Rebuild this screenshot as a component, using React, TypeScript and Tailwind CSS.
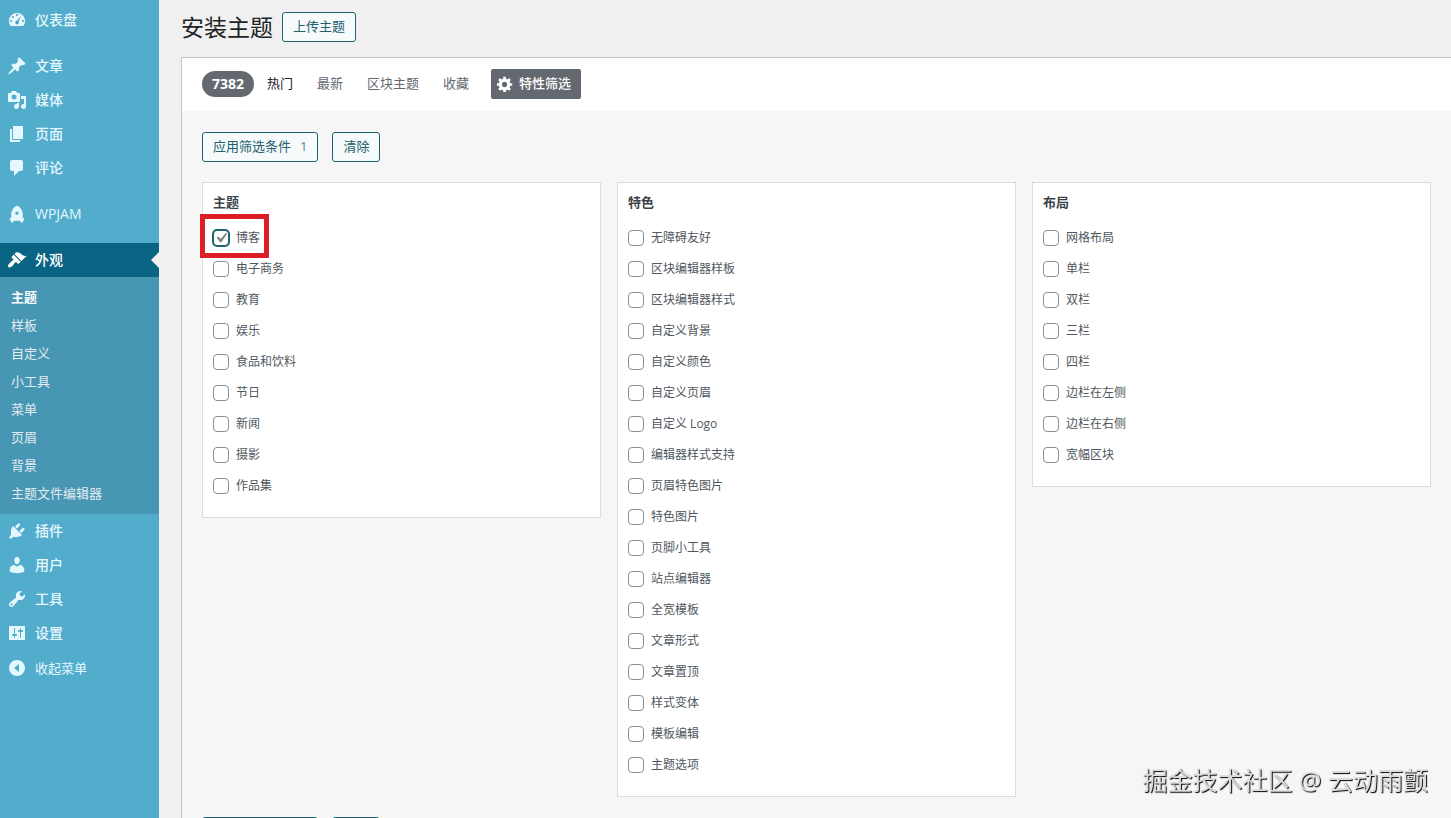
import { clsx } from "clsx";
import type { ReactNode } from "react";
import { RiRocketFill } from "react-icons/ri";

type MenuItem = {
  label: string;
  icon: ReactNode;
  separatorBefore?: boolean;
  children?: string[];
};

type FeatureGroup = {
  name: string;
  features: string[];
};

function Dashicon({ d, className }: { d: string; className?: string }) {
  return (
    <svg viewBox="0 0 20 20" className={clsx("size-5 shrink-0", className)} fill="currentColor" fillRule="evenodd" aria-hidden="true">
      <path d={d} />
    </svg>
  );
}

function DashboardIcon() {
  return (
    <svg viewBox="0 0 20 20" className="size-5 shrink-0" fill="currentColor" aria-hidden="true">
      <path d="M3.76 16h12.48A7.998 7.998 0 0 0 10 3a7.998 7.998 0 0 0-6.24 13z" />
      <g className="fill-[#4a9cbd]">
        <circle cx="10" cy="5" r="1" />
        <circle cx="6" cy="7" r="1" />
        <circle cx="4" cy="11" r="1" />
        <circle cx="16" cy="11" r="1" />
        <path d="M14.4 5.6 11.5 11.4a1.8 1.8 0 1 1-1.6-.7z" />
      </g>
    </svg>
  );
}

const icons = {
  post: "M10.44 3.02l1.82-1.82 6.36 6.35-1.83 1.82c-1.05-.68-2.48-.57-3.41.36l-.75.75c-.92.93-1.04 2.35-.35 3.41l-1.83 1.82-2.41-2.41-2.8 2.79c-.42.42-3.38 2.71-3.8 2.29s1.86-3.39 2.28-3.81l2.79-2.79L4.1 9.36l1.83-1.82c1.05.69 2.48.57 3.4-.36l.75-.75c.93-.92 1.05-2.35.36-3.41z",
  media:
    "M13 11V4c0-.55-.45-1-1-1h-1.67L9 1H5L3.67 3H2c-.55 0-1 .45-1 1v7c0 .55.45 1 1 1h10c.55 0 1-.45 1-1zM7 4.5c1.38 0 2.5 1.12 2.5 2.5S8.38 9.5 7 9.5 4.5 8.38 4.5 7 5.62 4.5 7 4.5zM14 6h5v10.5c0 1.38-1.12 2.5-2.5 2.5S14 17.88 14 16.5s1.12-2.5 2.5-2.5c.17 0 .34.02.5.05V9h-3V6zm-4 8.05V13h2v3.5c0 1.38-1.12 2.5-2.5 2.5S7 17.88 7 16.5 8.12 14 9.5 14c.17 0 .34.02.5.05z",
  page: "M6 15V2h10v13H6zm-1 1h8v2H3V5h2v11z",
  comments: "M5 2h9c1.1 0 2 .9 2 2v7c0 1.1-.9 2-2 2h-2l-5 5v-5H5c-1.1 0-2-.9-2-2V4c0-1.1.9-2 2-2z",
  appearance:
    "M14.48 11.06L7.41 3.99l1.5-1.5c.5-.56 2.3-.47 3.51.32 1.21.8 1.43 1.28 2.91 2.1 1.18.64 2.45 1.26 4.45.85zm-.71.71L6.7 4.7 4.93 6.47c-.39.39-.39 1.02 0 1.41l1.06 1.06c.39.39.39 1.03 0 1.42-.6.6-1.43 1.11-2.21 1.69-.35.26-.7.53-1.01.84C1.43 14.23.4 16.08 1.4 17.07c.99 1 2.84-.03 4.18-1.36.31-.31.58-.66.85-1.02.57-.78 1.08-1.61 1.69-2.21.39-.39 1.02-.39 1.41 0l1.06 1.06c.39.39 1.02.39 1.41 0z",
  plugins:
    "M13.11 4.36L9.87 7.6 8 5.73l3.24-3.24c.35-.34 1.05-.2 1.56.32.52.51.66 1.21.31 1.55zm-8 1.77l.91-1.12 9.01 9.01-1.19.84c-.71.71-2.63 1.16-3.82 1.16H6.14L4.9 17.26c-.59.59-1.54.59-2.12 0-.59-.58-.59-1.53 0-2.12l1.24-1.24v-3.88c0-1.13.4-3.19 1.09-3.89zm7.26 3.97l3.24-3.24c.34-.35 1.04-.21 1.55.31.52.51.66 1.21.31 1.55l-3.24 3.25z",
  users:
    "M10 9.25c-2.27 0-2.73-3.44-2.73-3.44C7 4.02 7.82 2 9.97 2c2.16 0 2.98 2.02 2.71 3.81 0 0-.41 3.44-2.68 3.44zm0 2.57L12.72 10c2.39 0 4.52 2.33 4.52 4.53v2.49s-3.65 1.13-7.24 1.13c-3.65 0-7.24-1.13-7.24-1.13v-2.49c0-2.25 1.94-4.48 4.47-4.48z",
  tools:
    "M16.68 9.77c-1.34 1.34-3.3 1.67-4.95.99l-5.41 6.52c-.99.99-2.59.99-3.58 0s-.99-2.59 0-3.57l6.52-5.42c-.68-1.65-.35-3.61.99-4.95 1.28-1.28 3.12-1.62 4.72-1.06l-2.89 2.89 2.82 2.82 2.86-2.87c.53 1.58.18 3.39-1.08 4.65zM3.81 16.21c.4.39 1.04.39 1.43 0 .4-.4.4-1.04 0-1.43-.39-.4-1.03-.4-1.43 0-.39.39-.39 1.03 0 1.43z",
  settings:
    "M18 16V4c0-.55-.45-1-1-1H3c-.55 0-1 .45-1 1v12c0 .55.45 1 1 1h14c.55 0 1-.45 1-1zM8 11h1c.55 0 1 .45 1 1s-.45 1-1 1H8v1.5c0 .28-.22.5-.5.5s-.5-.22-.5-.5V13H6c-.55 0-1-.45-1-1s.45-1 1-1h1V5.5c0-.28.22-.5.5-.5s.5.22.5.5V11zm5-2h-1c-.55 0-1-.45-1-1s.45-1 1-1h1V5.5c0-.28.22-.5.5-.5s.5.22.5.5V7h1c.55 0 1 .45 1 1s-.45 1-1 1h-1v5.5c0 .28-.22.5-.5.5s-.5-.22-.5-.5V9z",
  collapse: "M10 2a8 8 0 1 0 0 16 8 8 0 0 0 0-16zm2 4v8l-5-4z",
  gear: "M18 12h-2.18c-.17.7-.44 1.35-.81 1.93l1.54 1.54-2.1 2.1-1.54-1.54c-.58.36-1.23.63-1.91.79V19H8v-2.18c-.68-.16-1.33-.43-1.91-.79l-1.54 1.54-2.12-2.12 1.54-1.54c-.36-.58-.63-1.23-.79-1.91H1V9.03h2.17c.16-.7.44-1.35.8-1.94L2.43 5.55l2.1-2.1 1.54 1.54c.58-.37 1.24-.64 1.93-.81V2h3v2.18c.68.16 1.33.43 1.91.79l1.54-1.54 2.12 2.12-1.54 1.54c.36.59.64 1.24.8 1.94H18V12zm-8.5 1.5c1.66 0 3-1.34 3-3s-1.34-3-3-3-3 1.34-3 3 1.34 3 3 3z",
};

const menu: MenuItem[] = [
  { label: "仪表盘", icon: <DashboardIcon /> },
  { label: "文章", icon: <Dashicon d={icons.post} />, separatorBefore: true },
  { label: "媒体", icon: <Dashicon d={icons.media} /> },
  { label: "页面", icon: <Dashicon d={icons.page} /> },
  { label: "评论", icon: <Dashicon d={icons.comments} /> },
  { label: "WPJAM", icon: <RiRocketFill className="size-5 shrink-0" />, separatorBefore: true },
  {
    label: "外观",
    icon: <Dashicon d={icons.appearance} />,
    separatorBefore: true,
    children: ["主题", "样板", "自定义", "小工具", "菜单", "页眉", "背景", "主题文件编辑器"],
  },
  { label: "插件", icon: <Dashicon d={icons.plugins} /> },
  { label: "用户", icon: <Dashicon d={icons.users} /> },
  { label: "工具", icon: <Dashicon d={icons.tools} /> },
  { label: "设置", icon: <Dashicon d={icons.settings} /> },
];

const groups: FeatureGroup[] = [
  {
    name: "主题",
    features: ["博客", "电子商务", "教育", "娱乐", "食品和饮料", "节日", "新闻", "摄影", "作品集"],
  },
  {
    name: "特色",
    features: [
      "无障碍友好",
      "区块编辑器样板",
      "区块编辑器样式",
      "自定义背景",
      "自定义颜色",
      "自定义页眉",
      "自定义 Logo",
      "编辑器样式支持",
      "页眉特色图片",
      "特色图片",
      "页脚小工具",
      "站点编辑器",
      "全宽模板",
      "文章形式",
      "文章置顶",
      "样式变体",
      "模板编辑",
      "主题选项",
    ],
  },
  {
    name: "布局",
    features: ["网格布局", "单栏", "双栏", "三栏", "四栏", "边栏在左侧", "边栏在右侧", "宽幅区块"],
  },
];

function Sidebar() {
  return (
    <nav className="w-[159px] shrink-0 bg-[#52accc] pt-[3px] text-sm font-medium text-[#e5f8ff]">
      <ul>
        {menu.map((item) => (
          <li key={item.label} className={clsx(item.separatorBefore && "mt-3")}>
            <a
              href="#"
              className={clsx(
                "relative flex h-[34px] items-center gap-2 pl-[7px]",
                item.children && "bg-[#096484] text-white",
              )}
            >
              {item.icon}
              {item.label}
              {item.children && (
                <span className="absolute right-0 border-y-8 border-r-8 border-y-transparent border-r-[#f0f0f1]" />
              )}
            </a>
            {item.children && (
              <ul className="bg-[#4796b3] pt-1.5 pb-[7px] text-[13px] font-normal text-[#e2ecf1]">
                {item.children.map((child, i) => (
                  <li key={child}>
                    <a
                      href="#"
                      className={clsx("flex h-7 items-center pl-[11px]", i === 0 && "font-bold text-white")}
                    >
                      {child}
                    </a>
                  </li>
                ))}
              </ul>
            )}
          </li>
        ))}
      </ul>
      <button type="button" className="mt-px flex h-[34px] items-center gap-2 pl-[7px] text-[13px] font-normal">
        <Dashicon d={icons.collapse} />
        收起菜单
      </button>
    </nav>
  );
}

function OutlineButton({ children }: { children: ReactNode }) {
  return (
    <button
      type="button"
      className="flex h-[30px] items-center rounded-[3px] border border-[#1c6470] bg-[#f6fafa] px-2.5 text-[13px] text-[#22606f]"
    >
      {children}
    </button>
  );
}

function FilterButtons() {
  return (
    <div className="flex gap-3.5">
      <OutlineButton>
        应用筛选条件
        <span className="pl-[9px] text-[#5d8792]">1</span>
      </OutlineButton>
      <OutlineButton>清除</OutlineButton>
    </div>
  );
}

function FilterBar() {
  return (
    <div className="flex h-[53px] items-center bg-white px-5 pb-0.5 text-[13px] text-[#646970]">
      <span className="rounded-full bg-[#646970] px-2.5 text-sm leading-[26px] font-bold text-white">7382</span>
      <div className="ml-[13px] flex gap-6">
        <a href="#" className="text-[#1d2327]">
          热门
        </a>
        <a href="#">最新</a>
        <a href="#">区块主题</a>
        <a href="#">收藏</a>
      </div>
      <button
        type="button"
        className="ml-[22px] flex h-[30px] items-center gap-1 rounded-xs bg-[#646970] pr-2.5 pl-1 font-medium text-white"
      >
        <Dashicon d={icons.gear} className="p-px" />
        特性筛选
      </button>
    </div>
  );
}

function FeatureOption({ label, highlighted }: { label: string; highlighted: boolean }) {
  return (
    <li className="flex h-[31px] items-center">
      <label className="relative flex items-center gap-[7px]">
        <input
          type="checkbox"
          defaultChecked={highlighted}
          className="peer size-4 appearance-none rounded-sm border border-[#8c8f94] bg-white checked:border-[#1c6470] checked:ring-1 checked:ring-[#1c6470]"
        />
        <svg
          viewBox="0 0 20 20"
          className="pointer-events-none absolute -left-0.5 hidden size-5 fill-[#82878c] peer-checked:block"
          aria-hidden="true"
        >
          <path d="M14.83 4.89l1.34.94-5.81 8.38H9.02L5.78 9.67l1.34-1.25 2.57 2.4z" />
        </svg>
        {label}
        {highlighted && <span className="absolute -top-4 -right-[9px] -bottom-3 -left-[13px] border-[5px] border-[#dc1f26]" />}
      </label>
    </li>
  );
}

function FeatureGroupCard({ group }: { group: FeatureGroup }) {
  return (
    <fieldset className="flex-1 border border-[#dcdcde] bg-white px-2.5 pt-[9px] pb-4 text-xs text-[#50575e]">
      <legend className="float-left w-full text-[13px] leading-5 font-bold text-[#3c434a]">{group.name}</legend>
      <ul className="clear-both pt-2.5">
        {group.features.map((feature) => (
          <FeatureOption key={feature} label={feature} highlighted={feature === "博客"} />
        ))}
      </ul>
    </fieldset>
  );
}

export default function App() {
  return (
    <div className="flex h-screen overflow-hidden bg-[#f0f0f0] font-['Open_Sans','Noto_Sans_CJK_SC',sans-serif]">
      <Sidebar />
      <main className="min-w-0 flex-1 pl-[22px]">
        <header className="flex items-center gap-[9px] pt-3 pb-[15px]">
          <h1 className="text-[23px] leading-7 text-[#1d2327]">安装主题</h1>
          <OutlineButton>上传主题</OutlineButton>
        </header>
        <section className="border-t border-l border-[#c3c4c7] bg-[#f6f6f6]">
          <FilterBar />
          <div className="space-y-5 px-5 py-[21px]">
            <FilterButtons />
            <div className="flex items-start gap-4">
              {groups.map((group) => (
                <FeatureGroupCard key={group.name} group={group} />
              ))}
            </div>
            <FilterButtons />
          </div>
        </section>
      </main>
      <p className="pointer-events-none fixed right-[23px] bottom-[18px] text-[25px] leading-10 text-[#dcdcdc] [text-shadow:1px_1px_1px_#000]">
        掘金技术社区 @ 云动雨颤
      </p>
    </div>
  );
}
